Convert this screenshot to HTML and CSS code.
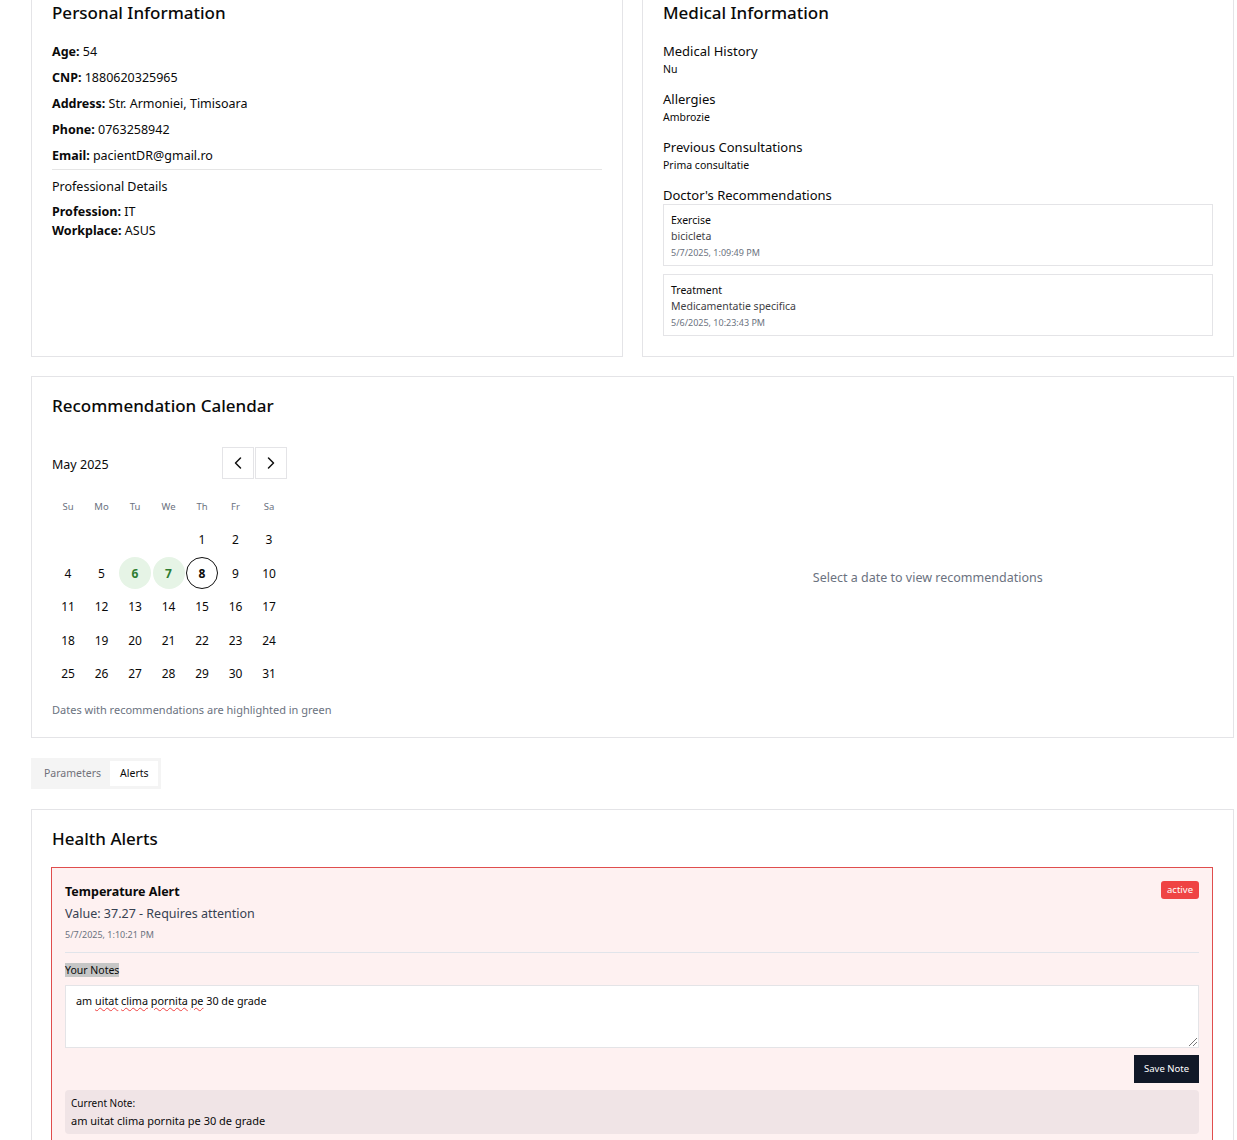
FILE: index.html
```html
<!DOCTYPE html>
<html lang="en">
<head>
<meta charset="utf-8">
<title>Patient Details</title>
<link rel="stylesheet" href="styles.css">
</head>
<body>
<main class="page">
  <div class="top-grid">
    <section class="card">
      <h2 class="card-title">Personal Information</h2>
      <div class="info-list">
        <p class="info-row"><strong>Age:</strong> 54</p>
        <p class="info-row"><strong>CNP:</strong> 1880620325965</p>
        <p class="info-row"><strong>Address:</strong> Str. Armoniei, Timisoara</p>
        <p class="info-row"><strong>Phone:</strong> 0763258942</p>
        <p class="info-row"><strong>Email:</strong> pacientDR@gmail.ro</p>
      </div>
      <hr class="divider">
      <h3 class="sub-title">Professional Details</h3>
      <p class="info-row tight"><strong>Profession:</strong> IT</p>
      <p class="info-row tight"><strong>Workplace:</strong> ASUS</p>
    </section>

    <section class="card">
      <h2 class="card-title">Medical Information</h2>
      <div class="med-group">
        <h3 class="med-label">Medical History</h3>
        <p class="med-value">Nu</p>
      </div>
      <div class="med-group">
        <h3 class="med-label">Allergies</h3>
        <p class="med-value">Ambrozie</p>
      </div>
      <div class="med-group">
        <h3 class="med-label">Previous Consultations</h3>
        <p class="med-value">Prima consultatie</p>
      </div>
      <div class="med-group">
        <h3 class="med-label">Doctor's Recommendations</h3>
        <div class="rec-list">
          <div class="rec">
            <div class="rec-type">Exercise</div>
            <div class="rec-desc">bicicleta</div>
            <div class="rec-date">5/7/2025, 1:09:49 PM</div>
          </div>
          <div class="rec">
            <div class="rec-type">Treatment</div>
            <div class="rec-desc">Medicamentatie specifica</div>
            <div class="rec-date">5/6/2025, 10:23:43 PM</div>
          </div>
        </div>
      </div>
    </section>
  </div>

  <section class="card">
    <h2 class="card-title">Recommendation Calendar</h2>
    <div class="cal-layout">
      <div class="cal">
        <div class="cal-head">
          <span class="cal-month">May 2025</span>
          <div class="cal-nav">
            <button class="nav-btn" aria-label="Previous month">
              <svg width="20" height="20" viewBox="0 0 24 24" fill="none" stroke="#111" stroke-width="1.8" stroke-linecap="round" stroke-linejoin="round"><path d="M15 18l-6-6 6-6"/></svg>
            </button>
            <button class="nav-btn" aria-label="Next month">
              <svg width="20" height="20" viewBox="0 0 24 24" fill="none" stroke="#111" stroke-width="1.8" stroke-linecap="round" stroke-linejoin="round"><path d="M9 18l6-6-6-6"/></svg>
            </button>
          </div>
        </div>
        <div class="cal-grid">
          <span class="wd">Su</span><span class="wd">Mo</span><span class="wd">Tu</span><span class="wd">We</span><span class="wd">Th</span><span class="wd">Fr</span><span class="wd">Sa</span>
          <span class="day"></span><span class="day"></span><span class="day"></span><span class="day"></span>
          <span class="day">1</span><span class="day">2</span><span class="day">3</span>
          <span class="day">4</span><span class="day">5</span><span class="day rec-day">6</span><span class="day rec-day">7</span><span class="day today">8</span><span class="day">9</span><span class="day">10</span>
          <span class="day">11</span><span class="day">12</span><span class="day">13</span><span class="day">14</span><span class="day">15</span><span class="day">16</span><span class="day">17</span>
          <span class="day">18</span><span class="day">19</span><span class="day">20</span><span class="day">21</span><span class="day">22</span><span class="day">23</span><span class="day">24</span>
          <span class="day">25</span><span class="day">26</span><span class="day">27</span><span class="day">28</span><span class="day">29</span><span class="day">30</span><span class="day">31</span>
        </div>
        <p class="cal-note">Dates with recommendations are highlighted in green</p>
      </div>
      <div class="cal-empty">Select a date to view recommendations</div>
    </div>
  </section>

  <div class="tabs">
    <button class="tab">Parameters</button>
    <button class="tab active">Alerts</button>
  </div>

  <section class="card">
    <h2 class="card-title">Health Alerts</h2>
    <div class="alert">
      <div class="alert-head">
        <div class="alert-info">
          <h3 class="alert-title">Temperature Alert</h3>
          <p class="alert-value">Value: 37.27 - Requires attention</p>
          <p class="alert-date">5/7/2025, 1:10:21 PM</p>
        </div>
        <span class="badge">active</span>
      </div>
      <div class="notes">
        <div class="notes-label"><span class="sel">Your Notes</span></div>
        <div class="textarea" role="textbox" aria-multiline="true">am <span class="spell">uitat</span> <span class="spell">clima</span> <span class="spell">pornita</span> <span class="spell">pe</span> 30 de grade</div>
        <div class="notes-actions">
          <button class="save-btn">Save Note</button>
        </div>
        <div class="current-note">
          <div class="cn-label">Current Note:</div>
          <div class="cn-text">am uitat clima pornita pe 30 de grade</div>
        </div>
      </div>
    </div>
  </section>
</main>
</body>
</html>
```

FILE: styles.css
```css
* { box-sizing: border-box; }

body {
  margin: 0;
  background: #fff;
  color: #0a0a0a;
  font-family: "Noto Sans", "Open Sans", sans-serif;
}

.page {
  margin-top: -17px;
  padding: 0 3px 0 31px;
  display: flex;
  flex-direction: column;
  gap: 20px;
}

.top-grid {
  display: grid;
  grid-template-columns: 1fr 1fr;
  gap: 19px;
  margin-bottom: -1px;
}

.card {
  border: 1px solid #e4e4e7;
  background: #fff;
  padding: 20px;
}

.card-title {
  margin: 0 0 19px;
  font-size: 17px;
  line-height: 18px;
  font-weight: 500;
  color: #0a0a0a;
}

/* Personal info */
.info-row {
  margin: 0 0 6px;
  font-size: 12.5px;
  line-height: 20px;
}
.info-list { padding-top: 1px; }
.info-row strong { font-weight: 700; }
.info-list .info-row:last-child { margin-bottom: 0; }
.info-row.tight { margin: 0; line-height: 19px; }

.divider {
  border: 0;
  border-top: 1px solid #e5e5e5;
  margin: 3px 0 7px;
}

.sub-title {
  margin: 0 0 5px;
  font-size: 12.5px;
  line-height: 20px;
  font-weight: 400;
}

/* Medical */
.med-group { margin-bottom: 12px; }
.med-group:last-child { margin-bottom: 0; }
.med-label {
  margin: 0;
  font-size: 13px;
  line-height: 20px;
  font-weight: 400;
}
.med-value {
  margin: 0;
  font-size: 10.5px;
  line-height: 16px;
}

.rec-list {
  margin-top: -1px;
  display: flex;
  flex-direction: column;
  gap: 8px;
}
.rec {
  border: 1px solid #e4e4e7;
  padding: 7px 7px 5px;
}
.rec-type { font-size: 10.5px; line-height: 16px; }
.rec-desc { font-size: 10.5px; line-height: 16px; color: #3f3f46; }
.rec-date { margin-top: 2px; font-size: 9px; line-height: 14px; color: #6b7280; }

/* Calendar */
.cal-layout {
  padding-top: 13px;
  display: grid;
  grid-template-columns: 1fr 1fr;
  gap: 20px;
}
.cal { width: 235px; }
.cal-head {
  display: flex;
  align-items: center;
  justify-content: space-between;
  height: 32px;
}
.cal-month { font-size: 12.5px; padding-top: 2px; }
.cal-nav { display: flex; gap: 1px; }
.nav-btn {
  width: 32px;
  height: 32px;
  padding: 0;
  border: 1px solid #e4e4e7;
  background: #fff;
  display: flex;
  align-items: center;
  justify-content: center;
}
.cal-grid {
  margin-top: 11px;
  width: 233px;
  display: grid;
  grid-template-columns: repeat(7, 32px);
  grid-auto-rows: 32px;
  justify-content: space-between;
  row-gap: 1.5px;
}
.wd, .day {
  display: flex;
  align-items: center;
  justify-content: center;
  border-radius: 50%;
}
.wd { font-size: 9.5px; color: #6b7280; }
.day { font-size: 12px; color: #0a0a0a; }
.rec-day { background: #e6f4e6; color: #2e7d32; font-weight: 700; }
.today { border: 1px solid #111; font-weight: 700; }

.cal-note {
  margin: 13px 0 0;
  font-size: 11px;
  line-height: 14px;
  color: #6b7280;
  white-space: nowrap;
}
.cal-empty {
  display: flex;
  align-items: center;
  justify-content: center;
  padding-bottom: 8px;
  font-size: 12.5px;
  color: #6b7280;
}

/* Tabs */
.tabs {
  align-self: flex-start;
  display: flex;
  background: #f4f4f4;
  padding: 3px;
}
.tab {
  height: 25px;
  padding: 0 9px 0 10px;
  border: 0;
  background: transparent;
  font-family: inherit;
  font-size: 10.5px;
  color: #71717a;
}
.tab.active { background: #fff; color: #0a0a0a; }

/* Alerts */
.alert {
  margin-left: -1px;
  border: 1px solid #e04d4d;
  background: #fef1f1;
  padding: 13px;
  padding-bottom: 40px;
}
.alert-head {
  display: flex;
  justify-content: space-between;
  align-items: flex-start;
}
.alert-title {
  margin: 0;
  font-size: 12.5px;
  line-height: 22px;
  font-weight: 700;
}
.alert-value {
  margin: 1px 0 0;
  font-size: 12.5px;
  line-height: 20px;
  color: #374151;
}
.alert-date {
  margin: 4px 0 0;
  font-size: 9px;
  line-height: 14px;
  color: #6b7280;
}
.badge {
  background: #ef4444;
  color: #fff;
  font-size: 9.5px;
  line-height: 18px;
  padding: 0 6px;
  border-radius: 3px;
}

.notes {
  margin-top: 10px;
  border-top: 1px solid #e1e4ea;
  padding-top: 10px;
}
.notes-label { font-size: 10.5px; line-height: 14px; }
.sel { background: #c6c6c6; }

.textarea {
  position: relative;
  margin-top: 8px;
  height: 63px;
  border: 1px solid #e4e4e7;
  background: #fff;
  padding: 8px 10px;
  font-size: 10.8px;
  line-height: 14px;
}
.textarea::after {
  content: "";
  position: absolute;
  right: 1px;
  bottom: 1px;
  width: 8px;
  height: 8px;
  background: linear-gradient(135deg, transparent 45%, #777 45%, #777 52%, transparent 52%, transparent 70%, #777 70%, #777 78%, transparent 78%);
}
.spell {
  text-decoration: underline wavy #f04040;
  text-decoration-thickness: 1px;
  text-underline-offset: 2px;
}

.notes-actions {
  margin-top: 7px;
  display: flex;
  justify-content: flex-end;
}
.save-btn {
  height: 28px;
  padding: 0 10px;
  border: 0;
  background: #111827;
  color: #fff;
  font-family: inherit;
  font-size: 9.5px;
}

.current-note {
  margin-top: 7px;
  background: #f0e4e6;
  border-radius: 4px;
  padding: 7px 6px 5px;
}
.cn-label { font-size: 10px; line-height: 13px; }
.cn-text { margin-top: 3px; font-size: 11px; line-height: 16px; }
```
